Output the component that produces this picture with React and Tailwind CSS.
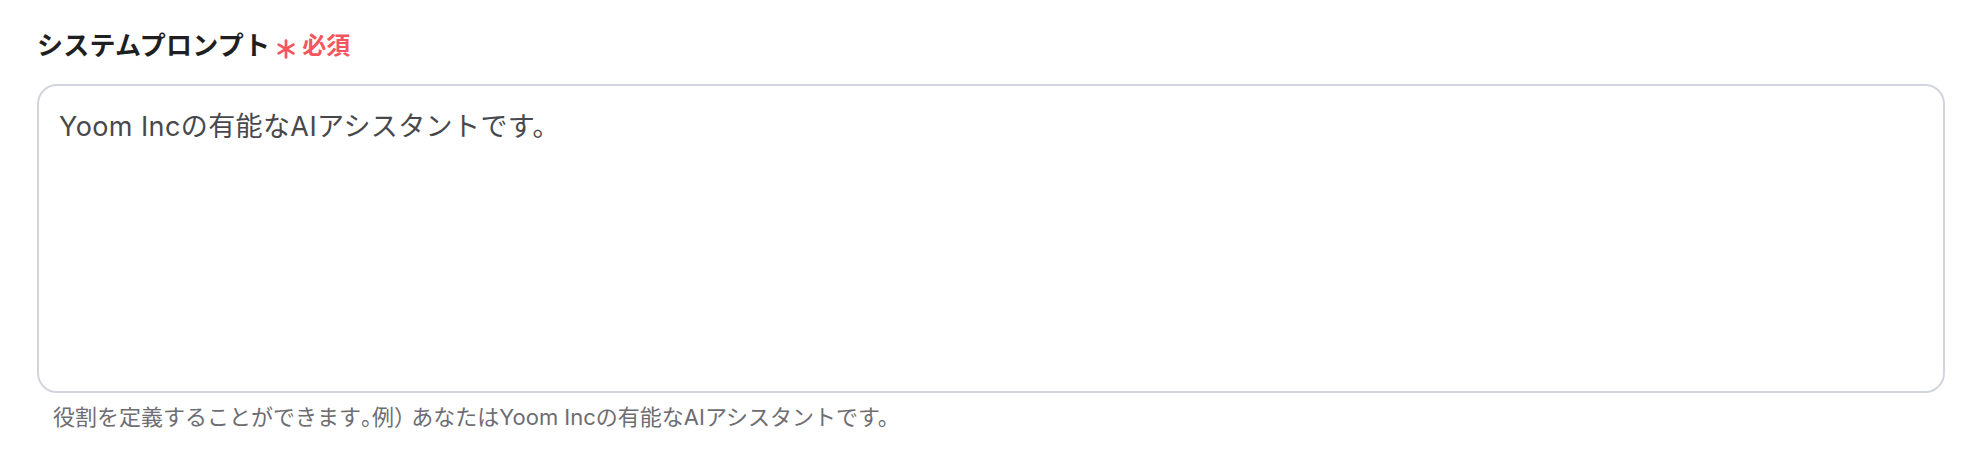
export default function App() {
  const font = { fontFamily: '"Inter", "Noto Sans CJK JP", sans-serif' }

  return (
    <div className="min-h-[458px] bg-white px-[37px] pt-[27px]" style={font}>
      <label className="flex items-center gap-[6px] leading-[38px]">
        <span className="text-[26px] font-bold text-[#1f1f22] tracking-[0.01em]">システムプロンプト</span>
        <span className="flex items-center gap-[6px] text-[#f5555c]">
          <svg width="20" height="20" viewBox="0 0 20 20" className="mt-[6px]">
            <g stroke="#f5555c" strokeWidth="2.7" strokeLinecap="round">
              <line x1="10" y1="1.5" x2="10" y2="18.5" />
              <line x1="2.6" y1="5.7" x2="17.4" y2="14.3" />
              <line x1="17.4" y1="5.7" x2="2.6" y2="14.3" />
            </g>
          </svg>
          <span className="text-[24px] font-semibold">必須</span>
        </span>
      </label>

      <textarea
        className="mt-[19px] block w-full h-[309px] resize-none rounded-[20px] border-2 border-[#d2d5de] bg-white px-[20px] py-[20px] text-[27px] leading-[42px] text-[#48484c] tracking-[0.015em] outline-none"
        style={font}
        defaultValue="Yoom Incの有能なAIアシスタントです。"
      />

      <p className="mt-[8px] pl-[16px] text-[22px] leading-[33px] text-[#6d6d72]">
        役割を定義することができます<span className="[font-feature-settings:'halt']">。</span>例<span className="[font-feature-settings:'halt']">）</span> あなたはYoom Incの有能なAIアシスタントです。
      </p>
    </div>
  )
}
